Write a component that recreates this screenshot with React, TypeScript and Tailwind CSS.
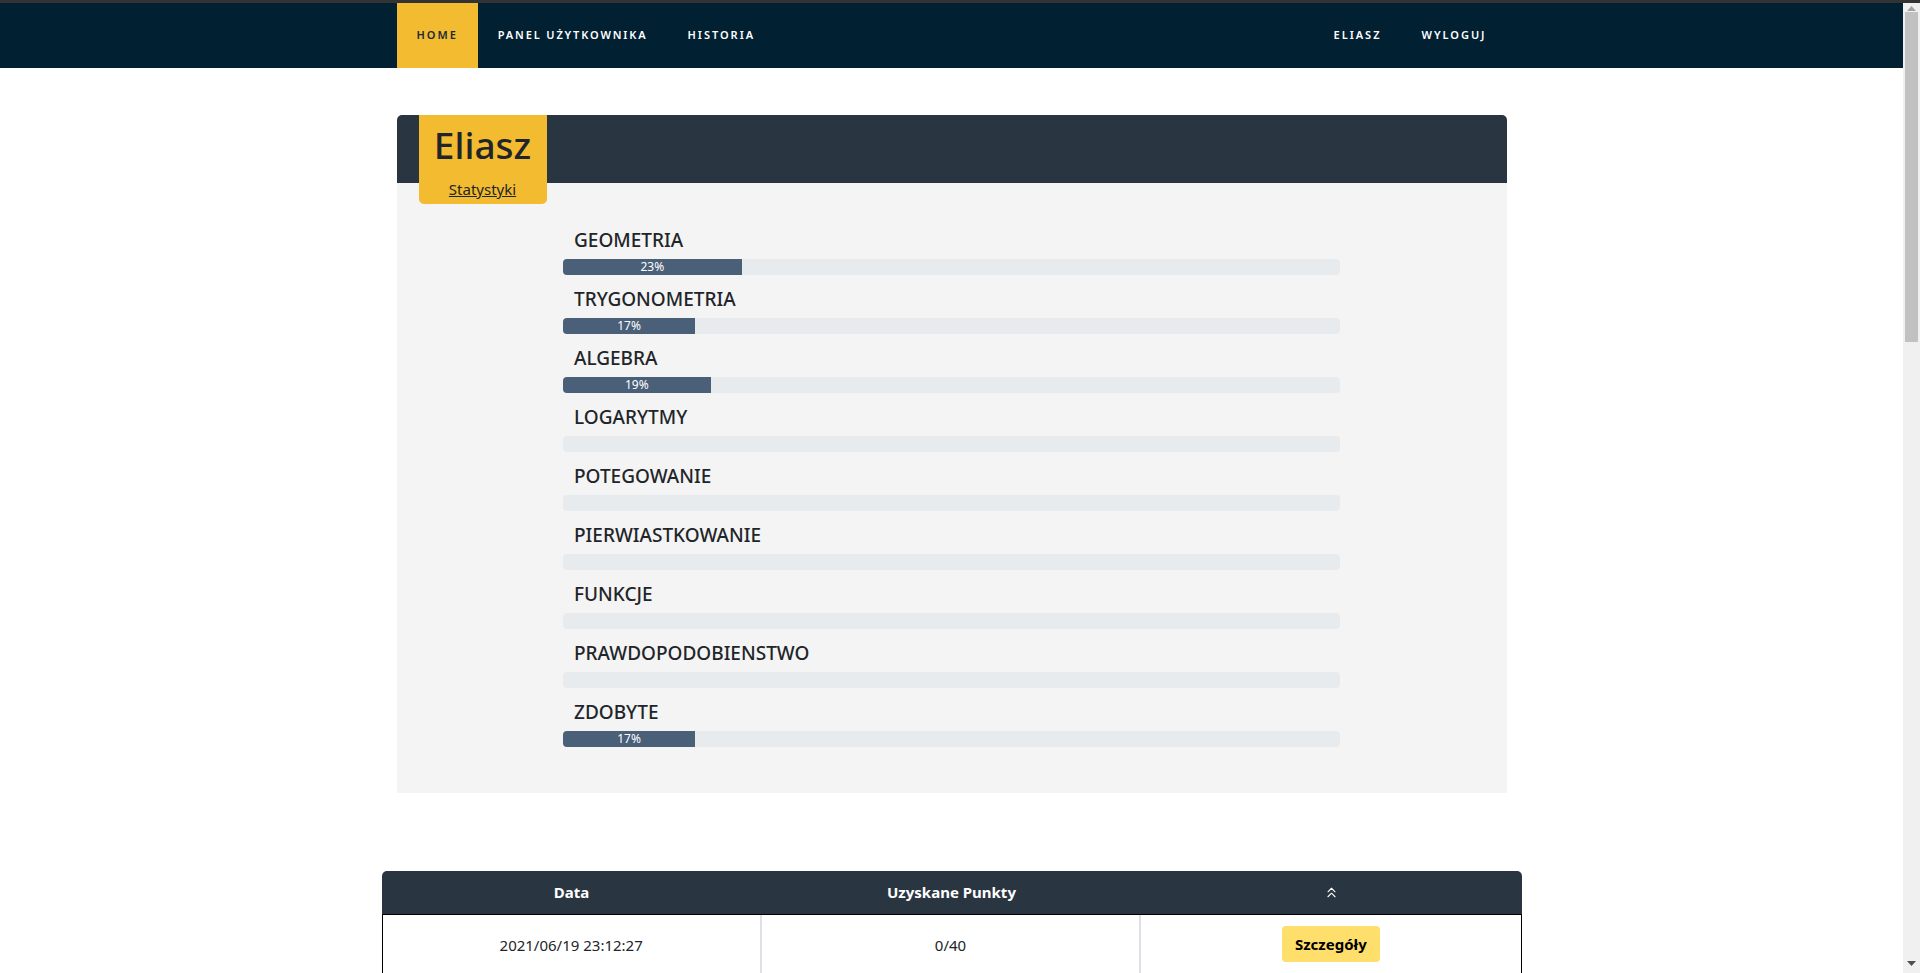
import React from "react";
import { ChevronsUp } from "lucide-react";

const stats: { name: string; pct: number | null }[] = [
  { name: "GEOMETRIA", pct: 23 },
  { name: "TRYGONOMETRIA", pct: 17 },
  { name: "ALGEBRA", pct: 19 },
  { name: "LOGARYTMY", pct: null },
  { name: "POTEGOWANIE", pct: null },
  { name: "PIERWIASTKOWANIE", pct: null },
  { name: "FUNKCJE", pct: null },
  { name: "PRAWDOPODOBIENSTWO", pct: null },
  { name: "ZDOBYTE", pct: 17 },
];

function Scrollbar() {
  return (
    <div className="flex w-[17px] shrink-0 flex-col items-center bg-[#f0f0f0]">
      <div className="flex h-[8px] w-full items-end justify-center">
        <svg width="9" height="5" viewBox="0 0 9 5">
          <path d="M4.5 0 L9 5 L0 5 Z" fill="#a3a3a3" />
        </svg>
      </div>
      <div className="mt-[1px] h-[330px] w-[13px] bg-[#c1c1c1]" />
      <div className="flex-1" />
      <div className="mb-[4px] flex h-[8px] w-full items-start justify-center">
        <svg width="9" height="5" viewBox="0 0 9 5">
          <path d="M0 0 L9 0 L4.5 5 Z" fill="#505050" />
        </svg>
      </div>
    </div>
  );
}

export default function App() {
  return (
    <div className="flex h-[973px] flex-col overflow-hidden bg-white text-[#212529] font-['Noto_Sans','Open_Sans',sans-serif]">
      <div className="h-[3px] shrink-0 bg-[#333333]" />
      <div className="flex min-h-0 flex-1">
        <main className="min-w-0 flex-1 overflow-hidden">
          <nav className="h-[65px] bg-[#012032]">
            <div className="mx-auto flex h-full w-[1110px] items-stretch justify-between">
              <div className="flex items-stretch">
                <a className="flex items-center bg-[#f2bb30] px-5 text-[11px] font-semibold tracking-[0.18em] text-[#1c2a36]">HOME</a>
                <a className="flex items-center px-5 text-[11px] font-semibold tracking-[0.17em] text-white">PANEL UŻYTKOWNIKA</a>
                <a className="flex items-center px-5 text-[11px] font-semibold tracking-[0.18em] text-white">HISTORIA</a>
              </div>
              <div className="flex items-stretch">
                <a className="flex items-center px-5 text-[11px] font-semibold tracking-[0.18em] text-white">ELIASZ</a>
                <a className="flex items-center px-5 text-[11px] font-semibold tracking-[0.18em] text-white">WYLOGUJ</a>
              </div>
            </div>
          </nav>

          <div className="mx-auto mt-[47px] w-[1110px]">
            <div className="h-[68px] rounded-t-[5px] bg-[#2a3542] pl-[22px]">
              <div className="relative z-10 flex h-[89px] w-[128px] flex-col items-center rounded-b-[5px] bg-[#f2bb30]">
                <div className="mt-[5px] text-[37px] font-medium leading-[50px] text-[#212529]">Eliasz</div>
                <a className="mt-[9px] text-[15px] leading-[20px] text-[#212529] underline">Statystyki</a>
              </div>
            </div>
            <div className="bg-[#f4f4f4] pb-[46px] pt-[33px]">
              <div className="mx-auto w-[777px]">
                {stats.map((s) => (
                  <div key={s.name}>
                    <div className="pl-[11px] pt-[11px] pb-[5px] text-[19px] font-medium leading-[27px] text-[#212529]">{s.name}</div>
                    <div className="flex h-[16px] overflow-hidden rounded-[4px] bg-[#e8ebee]">
                      {s.pct !== null && (
                        <div
                          className="flex items-center justify-center bg-[#4a5f78] text-[12px] leading-[16px] text-white"
                          style={{ width: `${s.pct}%` }}
                        >
                          {s.pct}%
                        </div>
                      )}
                    </div>
                  </div>
                ))}
              </div>
            </div>
          </div>

          <div className="mx-auto mt-[78px] w-[1140px]">
            <div className="grid h-[43px] grid-cols-3 items-center rounded-t-[5px] bg-[#2a3542] text-[15px] font-bold text-white">
              <div className="text-center">Data</div>
              <div className="text-center">Uzyskane Punkty</div>
              <div className="flex justify-center">
                <ChevronsUp size={17} strokeWidth={1.5} />
              </div>
            </div>
            <div className="grid grid-cols-3 border border-black text-[15px]">
              <div className="flex h-[60px] items-center justify-center border-r-2 border-[#dee2e6]">2021/06/19 23:12:27</div>
              <div className="flex h-[60px] items-center justify-center border-r-2 border-[#dee2e6]">0/40</div>
              <div className="flex h-[60px] items-start justify-center pt-[11px]">
                <button className="h-[36px] rounded-[4px] bg-[#ffdf6b] px-[13px] text-[15px] font-bold text-black">Szczegóły</button>
              </div>
            </div>
          </div>
        </main>
        <Scrollbar />
      </div>
    </div>
  );
}
